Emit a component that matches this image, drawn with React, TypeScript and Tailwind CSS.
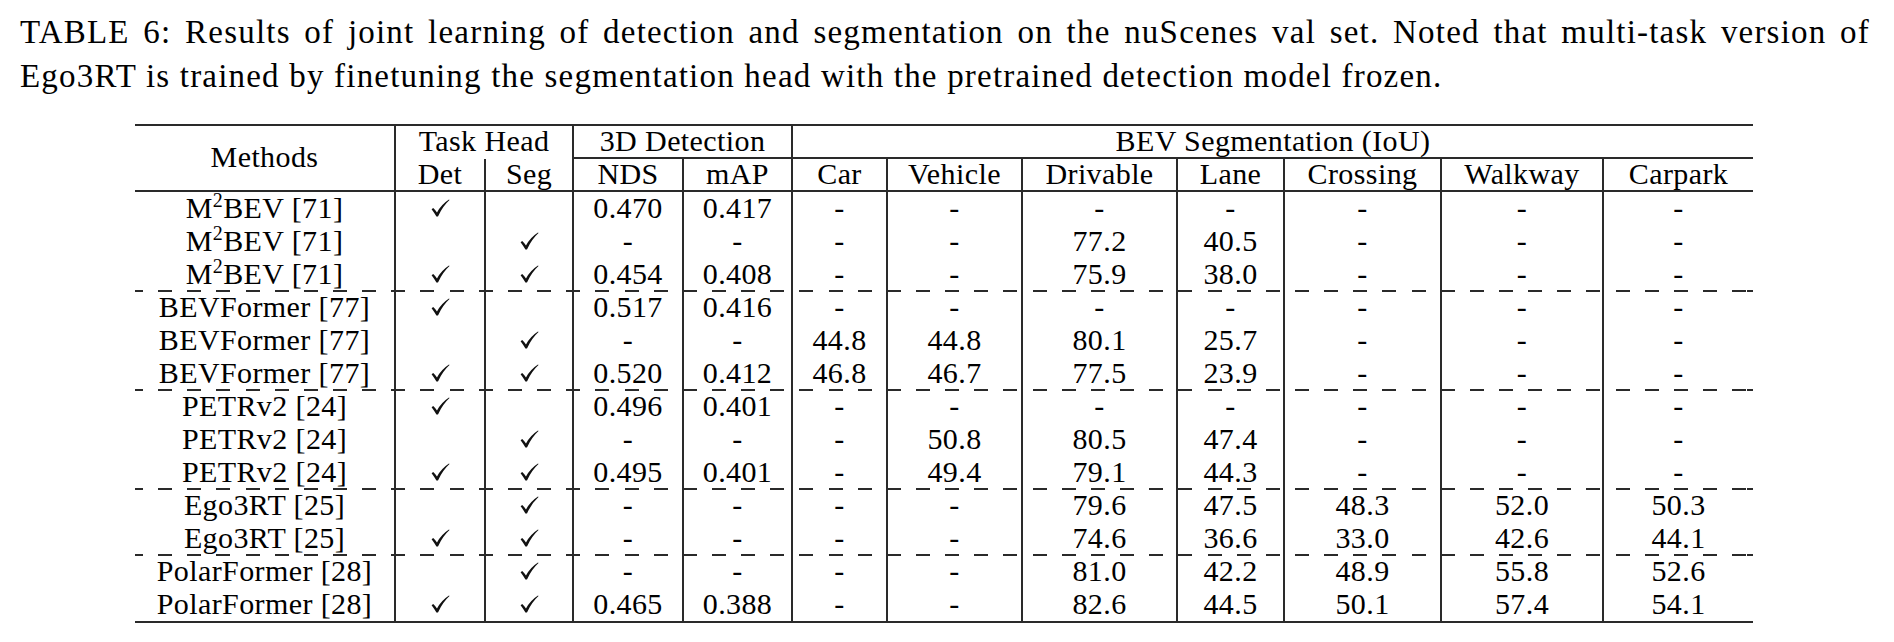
import React from "react";

const W = [
  "w-[261px]",
  "w-[90px]",
  "w-[88px]",
  "w-[110px]",
  "w-[109px]",
  "w-[95px]",
  "w-[135px]",
  "w-[155px]",
  "w-[107px]",
  "w-[157px]",
  "w-[162px]",
  "w-[149px]",
];

const CK = "__ck__";

type Row = string[];

const groups: Row[][] = [
  [
    ["M2", CK, "", "0.470", "0.417", "-", "-", "-", "-", "-", "-", "-"],
    ["M2", "", CK, "-", "-", "-", "-", "77.2", "40.5", "-", "-", "-"],
    ["M2", CK, CK, "0.454", "0.408", "-", "-", "75.9", "38.0", "-", "-", "-"],
  ],
  [
    ["BEVFormer [77]", CK, "", "0.517", "0.416", "-", "-", "-", "-", "-", "-", "-"],
    ["BEVFormer [77]", "", CK, "-", "-", "44.8", "44.8", "80.1", "25.7", "-", "-", "-"],
    ["BEVFormer [77]", CK, CK, "0.520", "0.412", "46.8", "46.7", "77.5", "23.9", "-", "-", "-"],
  ],
  [
    ["PETRv2 [24]", CK, "", "0.496", "0.401", "-", "-", "-", "-", "-", "-", "-"],
    ["PETRv2 [24]", "", CK, "-", "-", "-", "50.8", "80.5", "47.4", "-", "-", "-"],
    ["PETRv2 [24]", CK, CK, "0.495", "0.401", "-", "49.4", "79.1", "44.3", "-", "-", "-"],
  ],
  [
    ["Ego3RT [25]", "", CK, "-", "-", "-", "-", "79.6", "47.5", "48.3", "52.0", "50.3"],
    ["Ego3RT [25]", CK, CK, "-", "-", "-", "-", "74.6", "36.6", "33.0", "42.6", "44.1"],
  ],
  [
    ["PolarFormer [28]", "", CK, "-", "-", "-", "-", "81.0", "42.2", "48.9", "55.8", "52.6"],
    ["PolarFormer [28]", CK, CK, "0.465", "0.388", "-", "-", "82.6", "44.5", "50.1", "57.4", "54.1"],
  ],
];

function Check() {
  return (
    <svg width="19" height="18" viewBox="0 0 19 18" className="block">
      <path
        d="M0.6 10.2 L2.2 9.0 Q4.2 10.8 6.0 13.4 Q10 5.6 18 0.4 L18.5 1.1 Q11.8 7.2 7.0 17.4 L5.4 17.6 Q3.2 13.6 0.6 10.2 Z"
        fill="#111"
      />
    </svg>
  );
}

function Content({ v }: { v: string }) {
  if (v === CK) return <Check />;
  if (v === "M2")
    return (
      <span>
        M<sup className="text-[20px] -top-[11px]">2</sup>BEV [71]
      </span>
    );
  return <span>{v}</span>;
}

const LINE = "border-[#2a2a2a]";

function DataRow({ row }: { row: Row }) {
  return (
    <div className="flex h-[33px]">
      {row.map((v, i) => (
        <div
          key={i}
          className={`${W[i]} h-[33px] flex items-center justify-center pb-[2px] ${
            i < row.length - 1 ? "border-r-2 " + LINE : ""
          }`}
        >
          <Content v={v} />
        </div>
      ))}
    </div>
  );
}

function Dashed() {
  return (
    <div className="relative h-[2px] -my-[1px] bg-[repeating-linear-gradient(to_right,#2a2a2a_0_14px,transparent_14px_29.15px)] [background-position:-6px_0]" />
  );
}

export default function App() {
  return (
    <div className="w-[1894px] h-[642px] bg-white overflow-hidden text-black font-['Liberation_Serif',serif]">
      <div className="pt-[10px] pl-[20px] w-[1870px] text-[33px] leading-[44px] tracking-[1.2px]">
        <div className="text-justify [text-align-last:justify]">
          TABLE 6: Results of joint learning of detection and segmentation on the nuScenes val set. Noted that
          multi-task version of
        </div>
        <div>
          Ego3RT is trained by finetuning the segmentation head with the pretrained detection model frozen.
        </div>
      </div>

      <div className={`ml-[135px] mt-[26px] w-[1618px] border-t-2 border-b-2 ${LINE} text-[30px] tracking-[0.4px] leading-none`}>
        {/* header */}
        <div className={`flex border-b-2 ${LINE}`}>
          <div className={`w-[261px] h-[64px] border-r-2 ${LINE} flex items-center justify-center pb-[2px]`}>
            Methods
          </div>
          <div className={`w-[178px] border-r-2 ${LINE} flex flex-col`}>
            <div className="h-[33px] flex items-center justify-center pb-[4px]">Task Head</div>
            <div className="flex h-[31px]">
              <div className={`w-[90px] border-r-2 ${LINE} flex items-center justify-center pb-[2px]`}>Det</div>
              <div className="flex-1 flex items-center justify-center pb-[2px]">Seg</div>
            </div>
          </div>
          <div className={`w-[219px] border-r-2 ${LINE} flex flex-col`}>
            <div className={`h-[33px] border-b-2 ${LINE} flex items-center justify-center pb-[2px]`}>
              3D Detection
            </div>
            <div className="flex h-[31px]">
              <div className={`w-[110px] border-r-2 ${LINE} flex items-center justify-center pb-[2px]`}>NDS</div>
              <div className="flex-1 flex items-center justify-center pb-[2px]">mAP</div>
            </div>
          </div>
          <div className="w-[960px] flex flex-col">
            <div className={`h-[33px] border-b-2 ${LINE} flex items-center justify-center pb-[2px]`}>
              BEV Segmentation (IoU)
            </div>
            <div className="flex h-[31px]">
              <div className={`w-[95px] border-r-2 ${LINE} flex items-center justify-center pb-[2px]`}>Car</div>
              <div className={`w-[135px] border-r-2 ${LINE} flex items-center justify-center pb-[2px]`}>Vehicle</div>
              <div className={`w-[155px] border-r-2 ${LINE} flex items-center justify-center pb-[2px]`}>Drivable</div>
              <div className={`w-[107px] border-r-2 ${LINE} flex items-center justify-center pb-[2px]`}>Lane</div>
              <div className={`w-[157px] border-r-2 ${LINE} flex items-center justify-center pb-[2px]`}>Crossing</div>
              <div className={`w-[162px] border-r-2 ${LINE} flex items-center justify-center pb-[2px]`}>Walkway</div>
              <div className="w-[149px] flex items-center justify-center pb-[2px]">Carpark</div>
            </div>
          </div>
        </div>

        {/* body */}
        <div className="flex flex-col">
          {groups.map((g, gi) => (
            <React.Fragment key={gi}>
              {gi > 0 && <Dashed />}
              {g.map((r, ri) => (
                <DataRow key={ri} row={r} />
              ))}
            </React.Fragment>
          ))}
        </div>
      </div>
    </div>
  );
}
